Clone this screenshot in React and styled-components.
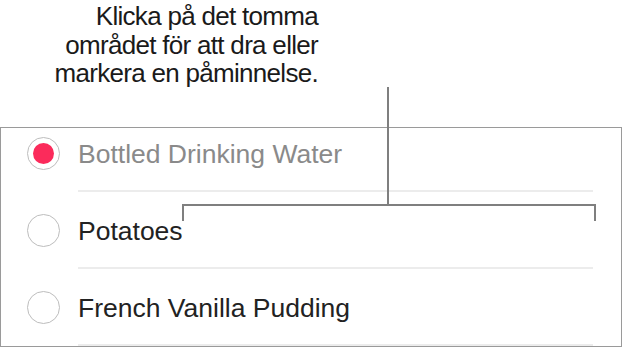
import React from 'react'
import styled, { createGlobalStyle } from 'styled-components'

const GlobalStyle = createGlobalStyle`
  html, body {
    margin: 0;
    padding: 0;
    background: #ffffff;
  }
  body {
    font-family: "Liberation Sans", Arial, sans-serif;
    -webkit-font-smoothing: antialiased;
  }
`

const Page = styled.div`
  position: relative;
  width: 622px;
  height: 348px;
  overflow: hidden;
`

const Callout = styled.div`
  width: 318px;
  height: 127px;
  box-sizing: border-box;
  padding-top: 2px;
  text-align: right;
  font-size: 26px;
  letter-spacing: -0.7px;
  line-height: 28.5px;
  color: #1a1a1a;
`

const Panel = styled.div`
  width: 622px;
  height: 220px;
  box-sizing: border-box;
  border: 1px solid #9a9a9a;
  overflow: hidden;
`

const List = styled.ul`
  list-style: none;
  margin: -13px 0 0;
  padding: 0;
`

const Row = styled.li`
  display: flex;
  align-items: center;
  height: 77px;
  padding-left: 26px;
`

const Radio = styled.span`
  flex: none;
  width: 33px;
  height: 33px;
  box-sizing: border-box;
  border-radius: 50%;
  border: 1.5px solid #bdbdbd;
  display: flex;
  align-items: center;
  justify-content: center;

  &::after {
    content: '';
    width: 21px;
    height: 21px;
    border-radius: 50%;
    background: #fb2b5b;
    display: ${p => (p.$checked ? 'block' : 'none')};
  }
`

const Body = styled.div`
  flex: 1;
  align-self: stretch;
  margin-left: 18px;
  margin-right: 28px;
  display: flex;
  align-items: center;
  border-bottom: 2px solid #ececec;
  box-sizing: border-box;
  padding-top: 4px;
`

const Title = styled.span`
  font-size: 26.5px;
  color: ${p => (p.$done ? '#8a8a8a' : '#222222')};
`

const Leader = styled.svg`
  position: absolute;
  left: 0;
  top: 0;
  pointer-events: none;
`

const items = [
  { title: 'Bottled Drinking Water', done: true },
  { title: 'Potatoes', done: false },
  { title: 'French Vanilla Pudding', done: false },
]

export default function App() {
  return (
    <Page>
      <GlobalStyle />
      <Callout>
        Klicka på det tomma<br />
        området för att dra eller<br />
        markera en påminnelse.
      </Callout>
      <Panel>
        <List>
          {items.map(item => (
            <Row key={item.title}>
              <Radio $checked={item.done} />
              <Body>
                <Title $done={item.done}>{item.title}</Title>
              </Body>
            </Row>
          ))}
        </List>
      </Panel>
      <Leader width="622" height="348">
        <g stroke="#7f7f7f" strokeWidth="2" fill="none">
          <line x1="388" y1="87" x2="388" y2="206" />
          <polyline points="183,221 183,205 595,205 595,221" />
        </g>
      </Leader>
    </Page>
  )
}
